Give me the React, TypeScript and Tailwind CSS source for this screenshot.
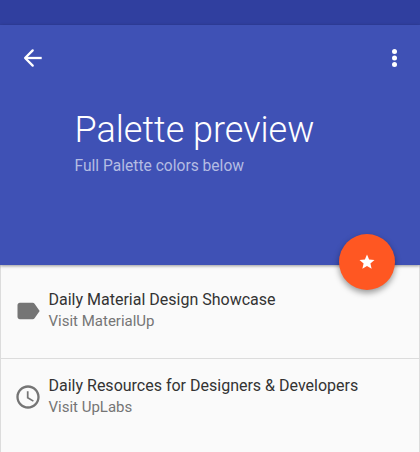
import React from "react";
import { MdStar, MdLabel, MdAccessTime } from "react-icons/md";

const items = [
  { Icon: MdLabel, title: "Daily Material Design Showcase", sub: "Visit MaterialUp", row: "h-[94px] pt-[24px]" },
  { Icon: MdAccessTime, title: "Daily Resources for Designers & Developers", sub: "Visit UpLabs", row: "h-[94px] pt-[16px]" },
];

function BackIcon() {
  return (
    <svg width="20" height="20" viewBox="0 0 20 20" fill="none" stroke="currentColor" strokeWidth="2.3" strokeLinecap="round" strokeLinejoin="round">
      <path d="M9.7 2.4 2.1 10l7.6 7.6" />
      <path d="M2.1 10H18.7" strokeLinecap="butt" />
    </svg>
  );
}

function MoreIcon() {
  return (
    <svg width="5" height="20" viewBox="0 0 5 20" fill="currentColor">
      <circle cx="2.5" cy="3.5" r="2.5" />
      <circle cx="2.5" cy="10" r="2.5" />
      <circle cx="2.5" cy="16.5" r="2.5" />
    </svg>
  );
}

export default function App() {
  return (
    <div className="flex h-[452px] w-[420px] flex-col overflow-hidden bg-[#fafafa] font-['Roboto',sans-serif] antialiased">
      <div className="h-[25px] shrink-0 bg-[#303f9f]" />
      <header className="relative z-10 flex h-[240px] shrink-0 flex-col bg-[#3f51b5] text-white shadow-[0_1px_3px_rgba(0,0,0,0.4)]">
        <div className="flex h-[45px] items-start justify-between pt-[23px] pr-[23px] pl-[23px]">
          <button aria-label="Back"><BackIcon /></button>
          <button aria-label="More"><MoreIcon /></button>
        </div>
        <h1 className="mt-[38px] pl-[74.5px] text-[36px] leading-[44px] font-light">Palette preview</h1>
        <p className="mt-[4px] pl-[74.5px] text-[15.6px] leading-5 text-[#b4bce3]">Full Palette colors below</p>
        <button aria-label="Favorite" className="absolute top-[209px] left-[339px] flex h-14 w-14 items-center justify-center rounded-full bg-[#ff5722] shadow-[0_3px_6px_rgba(0,0,0,0.4)]">
          <MdStar size={18} className="mr-px" />
        </button>
      </header>
      <main className="flex-1 border-x border-[#dcdcdc]">
        {items.map(({ Icon, title, sub, row }) => (
          <div key={title} className={`flex items-start border-b border-[#dcdcdc] pl-[13px] ${row}`}>
            <Icon size={28} className="mt-[8px] mr-[6.5px] text-[#757575]" />
            <div>
              <p className="text-[16px] leading-[21px] text-[#333333]">{title}</p>
              <p className="text-[15px] leading-[23px] text-[#757575]">{sub}</p>
            </div>
          </div>
        ))}
      </main>
    </div>
  );
}
